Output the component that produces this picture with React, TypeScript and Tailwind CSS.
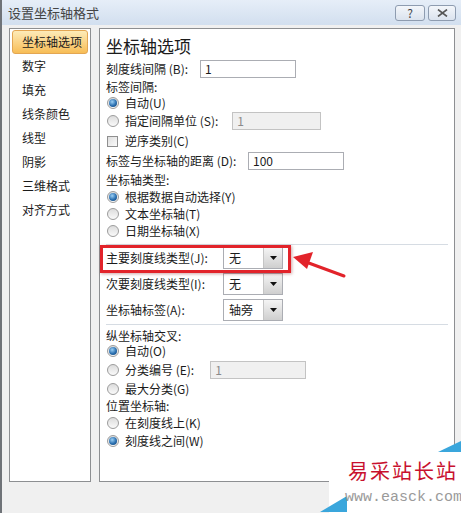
import React from "react"

const menu = ["坐标轴选项", "数字", "填充", "线条颜色", "线型", "阴影", "三维格式", "对齐方式"]

function Radio({ checked = false }: { checked?: boolean }) {
  return (
    <span className="flex h-[12px] w-[12px] shrink-0 items-center justify-center rounded-full border border-[#9c9c9c] bg-linear-to-b from-[#dcdcdc] to-[#fafafa]">
      {checked && (
        <span className="h-[8px] w-[8px] rounded-full bg-[radial-gradient(circle_at_40%_35%,#9cd0f5,#2a6fb0_55%,#123d6b)]" />
      )}
    </span>
  )
}

function Checkbox() {
  return (
    <span className="h-[11px] w-[11px] shrink-0 border border-[#8f8f8f] bg-linear-to-br from-[#dedede] to-[#fbfbfb]" />
  )
}

function TextBox({ value, width, disabled = false }: { value: string; width: string; disabled?: boolean }) {
  return (
    <div
      className={
        disabled
          ? `${width} flex h-[18px] items-center border border-[#c3c3c3] bg-[#f0f0f0] pl-[4px] text-[#8a8a8a]`
          : `${width} flex h-[18px] items-center border border-[#abadb3] bg-white pl-[4px]`
      }
    >
      {value}
    </div>
  )
}

function Select({ value }: { value: string }) {
  return (
    <div className="flex h-[22px] w-[60px] items-stretch border border-[#abadb3] bg-white">
      <span className="flex flex-1 items-center pl-[5px]">{value}</span>
      <span className="flex w-[19px] items-center justify-center border-l border-[#c5c5c5] bg-linear-to-b from-[#f4f4f4] to-[#cfcfcf]">
        <svg width="7" height="4" viewBox="0 0 7 4">
          <polygon points="0,0 7,0 3.5,4" fill="#111" />
        </svg>
      </span>
    </div>
  )
}

function RadioRow({ h, checked, label, children }: { h: string; checked?: boolean; label: string; children?: React.ReactNode }) {
  return (
    <div className={`${h} flex items-center pl-[1px]`}>
      <Radio checked={checked} />
      <span className="ml-[6px]">{label}</span>
      {children}
    </div>
  )
}

export default function App() {
  return (
    <div className="relative h-[513px] w-[461px] overflow-hidden border-l-2 border-[#6f7378] bg-[#f0f0f0] text-[12px] text-[#1b1b1b] font-['Noto_Sans_CJK_SC',sans-serif]">
      {/* title bar */}
      <div className="flex h-[25px] items-center justify-between bg-linear-to-b from-[#e6eef8] to-[#d2dfef] pl-[6px] pr-[5px]">
        <span className="text-[13px] text-[#444]">设置坐标轴格式</span>
        <div className="flex gap-[3px]">
          <span className="flex h-[16px] w-[30px] items-center justify-center rounded-[3px] border border-[#8e9cb0] bg-linear-to-b from-[#f3f6fa] to-[#dbe3ee] text-[12px] leading-none text-[#444]">
            ?
          </span>
          <span className="flex h-[16px] w-[28px] items-center justify-center rounded-[3px] border border-[#8e9cb0] bg-linear-to-b from-[#f3f6fa] to-[#dbe3ee]">
            <svg width="11" height="8" viewBox="0 0 11 8">
              <path d="M1 0.5 L10 7.5 M10 0.5 L1 7.5" stroke="#555" strokeWidth="1.6" />
            </svg>
          </span>
        </div>
      </div>

      {/* body */}
      <div className="flex gap-[8px] pl-[7px] pt-[3px]">
        {/* left menu */}
        <div className="flex h-[454px] w-[82px] flex-col border border-[#8d8f92] bg-white px-[2px] pt-[1px] text-[12px]">
          {menu.map((m, i) =>
            i === 0 ? (
              <div
                key={m}
                className="flex h-[24px] items-center rounded-[3px] border border-[#e3a653] bg-linear-to-b from-[#fdebb8] via-[#fbd487] to-[#f7bd55] pl-[9px]"
              >
                {m}
              </div>
            ) : (
              <div key={m} className="flex h-[24px] items-center pl-[10px]">
                {m}
              </div>
            )
          )}
        </div>

        {/* right options */}
        <div className="flex h-[454px] w-[356px] flex-col border border-[#8d8f92] bg-white pl-[6px] pt-[6px] leading-[14px]">
          <div className="flex h-[22px] items-center text-[17px] leading-[22px]">坐标轴选项</div>

          <div className="flex h-[23px] items-center">
            <span className="w-[94px]">刻度线间隔 (B):</span>
            <TextBox value="1" width="w-[96px]" />
          </div>
          <div className="flex h-[14px] items-center">标签间隔:</div>
          <RadioRow h="h-[17px]" checked label="自动(U)" />
          <RadioRow h="h-[20px]" label="指定间隔单位 (S):">
            <span className="ml-[14px]">
              <TextBox value="1" width="w-[89px]" disabled />
            </span>
          </RadioRow>
          <div className="flex h-[20px] items-center pl-[1px]">
            <Checkbox />
            <span className="ml-[7px]">逆序类别(C)</span>
          </div>
          <div className="flex h-[20px] items-center">
            <span className="w-[142px]">标签与坐标轴的距离 (D):</span>
            <TextBox value="100" width="w-[96px]" />
          </div>
          <div className="flex h-[18px] items-center">坐标轴类型:</div>
          <RadioRow h="h-[16px]" checked label="根据数据自动选择(Y)" />
          <RadioRow h="h-[18px]" label="文本坐标轴(T)" />
          <RadioRow h="h-[16px]" label="日期坐标轴(X)" />

          <div className="mr-[6px] h-[6px] border-b border-[#d6dce3]" />

          <div className="flex h-[26px] items-center">
            <span className="w-[117px]">主要刻度线类型(J):</span>
            <Select value="无" />
          </div>
          <div className="flex h-[26px] items-center">
            <span className="w-[117px]">次要刻度线类型(I):</span>
            <Select value="无" />
          </div>
          <div className="flex h-[26px] items-center">
            <span className="w-[117px]">坐标轴标签(A):</span>
            <Select value="轴旁" />
          </div>

          <div className="mr-[6px] h-[2px] border-b border-[#d6dce3]" />

          <div className="mt-[2px] flex h-[17px] items-center">纵坐标轴交叉:</div>
          <RadioRow h="h-[14px]" checked label="自动(O)" />
          <RadioRow h="h-[24px]" label="分类编号 (E):">
            <span className="ml-[16px]">
              <TextBox value="1" width="w-[96px]" disabled />
            </span>
          </RadioRow>
          <RadioRow h="h-[14px]" label="最大分类(G)" />
          <div className="flex h-[20px] items-center">位置坐标轴:</div>
          <RadioRow h="h-[14px]" label="在刻度线上(K)" />
          <RadioRow h="h-[22px]" checked label="刻度线之间(W)" />
        </div>
      </div>

      {/* annotation: red box + arrow */}
      <div className="pointer-events-none absolute left-[98px] top-[245px] h-[28px] w-[191px] border-[3px] border-[#e2232a] shadow-[1px_1px_3px_rgba(120,0,0,0.35)]" />
      <svg className="pointer-events-none absolute left-0 top-0" width="461" height="513">
        <line x1="342" y1="276" x2="304" y2="262" stroke="#e2232a" strokeWidth="3" strokeLinecap="round" />
        <polygon points="291,257 311,252 305,269" fill="#e2232a" />
      </svg>

      {/* watermark */}
      <div className="absolute left-[327px] top-[452px] h-[61px] w-[134px] bg-white" />
      <svg className="pointer-events-none absolute left-0 top-0" width="461" height="513">
        <polygon points="436,452 461,440 461,452" fill="#3aa6dc" />
        <polygon points="318,512 345,496 345,512" fill="#3aa6dc" />
      </svg>
      <div className="absolute left-[346px] top-[461px] whitespace-nowrap text-[20px] leading-none tracking-[2px] text-[#c8102e] font-['Noto_Sans_CJK_SC',serif]">
        易采站长站
      </div>
      <div className="absolute left-[343px] top-[490px] whitespace-nowrap text-[15px] leading-none text-[#9a9a9a] font-['Liberation_Mono',monospace]">
        www.easck.com
      </div>
    </div>
  )
}
